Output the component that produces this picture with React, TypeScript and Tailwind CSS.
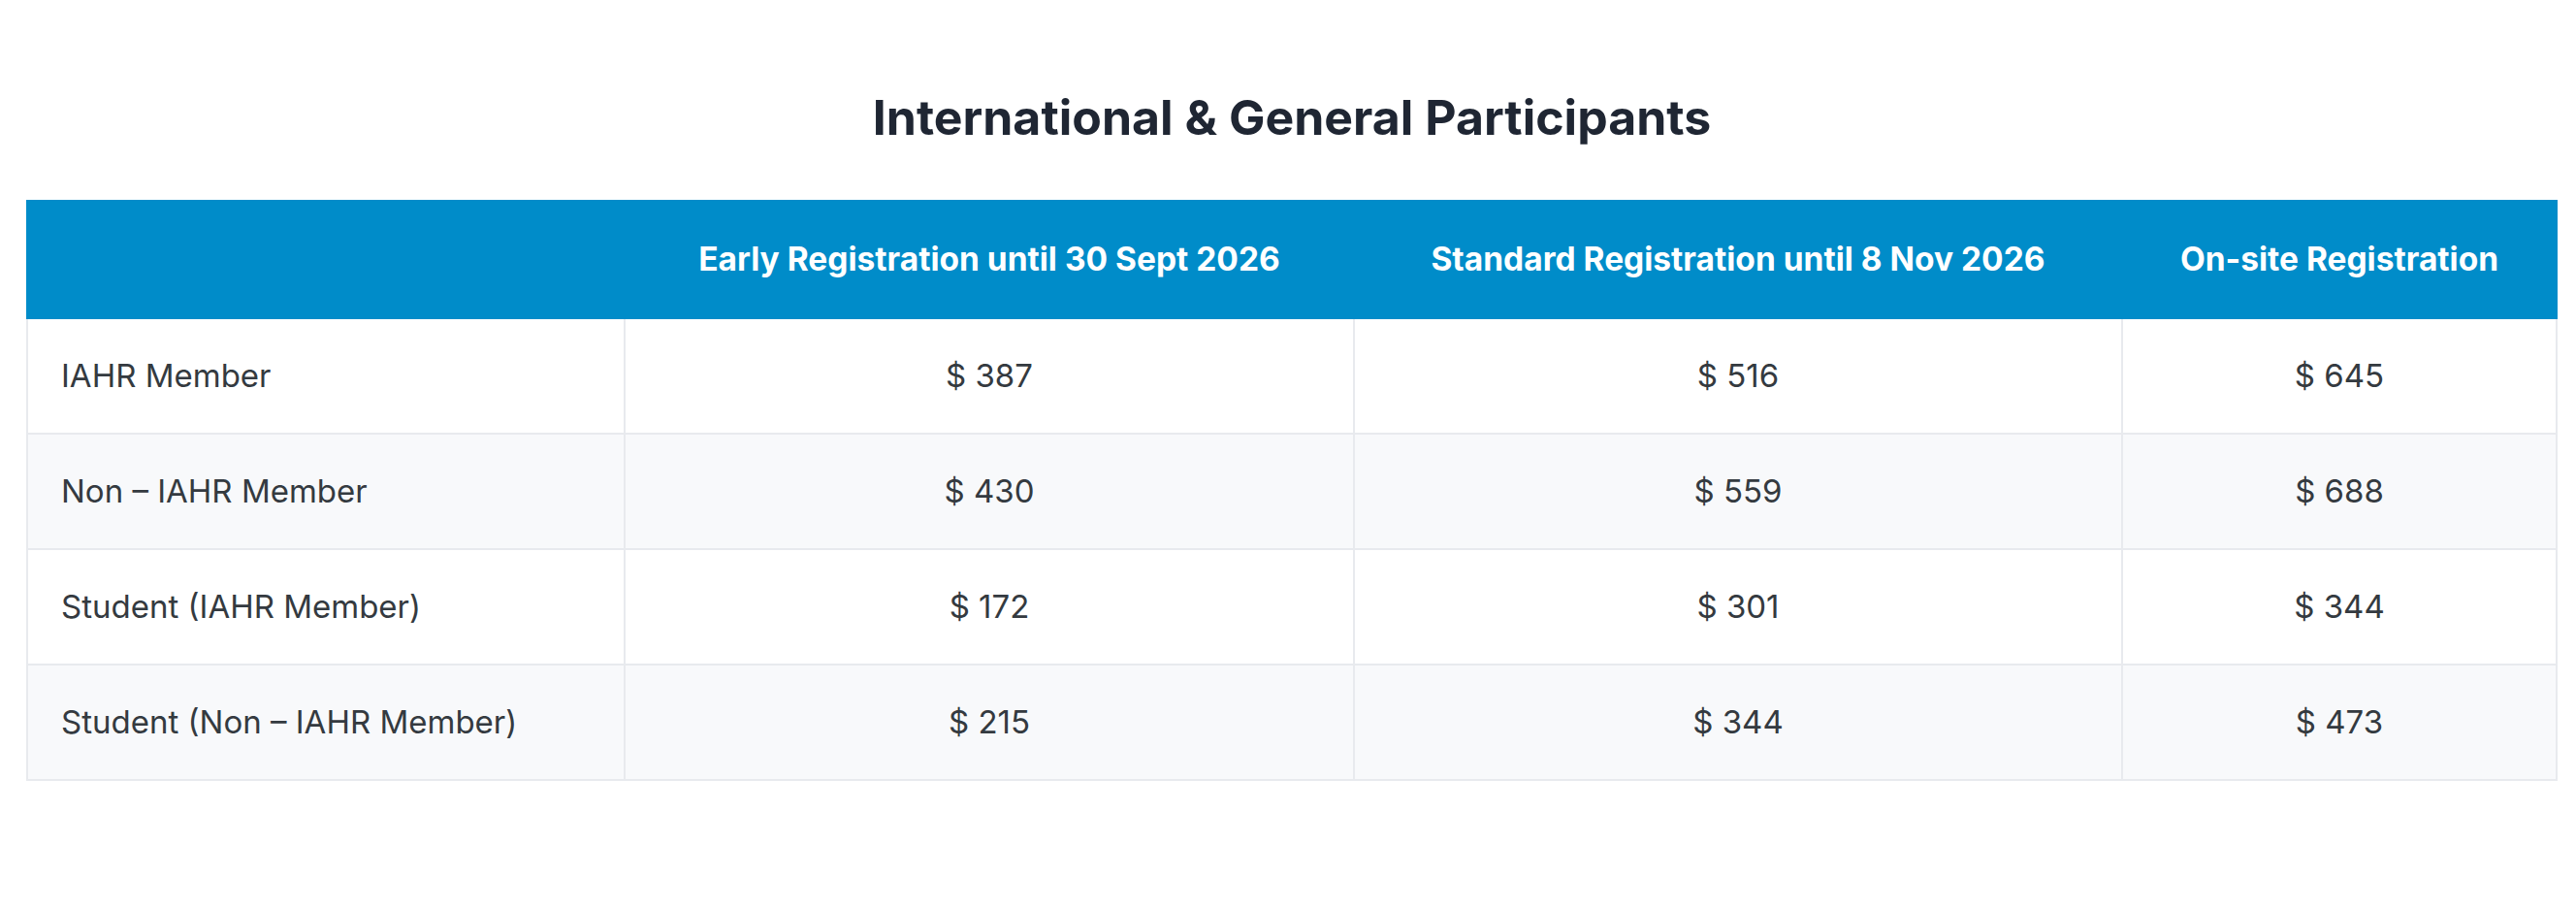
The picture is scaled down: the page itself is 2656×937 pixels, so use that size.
import React from "react";

const rows = [
  ["IAHR Member", "$ 387", "$ 516", "$ 645"],
  ["Non – IAHR Member", "$ 430", "$ 559", "$ 688"],
  ["Student (IAHR Member)", "$ 172", "$ 301", "$ 344"],
  ["Student (Non – IAHR Member)", "$ 215", "$ 344", "$ 473"],
];

export default function App() {
  return (
    <div className="min-h-[937px] bg-white pl-[27px] pr-[19px] pt-[92px]" style={{ fontFamily: "Inter, 'Noto Sans', sans-serif" }}>
      <h2 className="text-center text-[50px] leading-[58px] font-bold text-[#1f2633] mb-[56px]">
        International &amp; General Participants
      </h2>
      <table className="w-full border-collapse table-fixed">
        <colgroup>
          <col className="w-[616px]" />
          <col className="w-[752px]" />
          <col className="w-[792px]" />
          <col />
        </colgroup>
        <thead>
          <tr className="bg-[#008cc9] h-[121px]">
            <th className="border-2 border-[#008cc9]"></th>
            <th className="border-2 border-[#008cc9] text-white text-[33.5px] font-bold text-center">Early Registration until 30 Sept 2026</th>
            <th className="border-2 border-[#008cc9] text-white text-[33.5px] font-bold text-center">Standard Registration until 8 Nov 2026</th>
            <th className="border-2 border-[#008cc9] text-white text-[33.5px] font-bold text-center">On-site Registration</th>
          </tr>
        </thead>
        <tbody>
          {rows.map((r, i) => (
            <tr key={i} className={`h-[119px] ${i % 2 === 1 ? "bg-[#f8f9fb]" : "bg-white"}`}>
              {r.map((c, j) => (
                <td
                  key={j}
                  className={`border-2 border-[#e8eaee] text-[33px] text-[#343a40] ${j === 0 ? "text-left pl-[34px]" : "text-center"}`}
                >
                  {c}
                </td>
              ))}
            </tr>
          ))}
        </tbody>
      </table>
    </div>
  );
}
